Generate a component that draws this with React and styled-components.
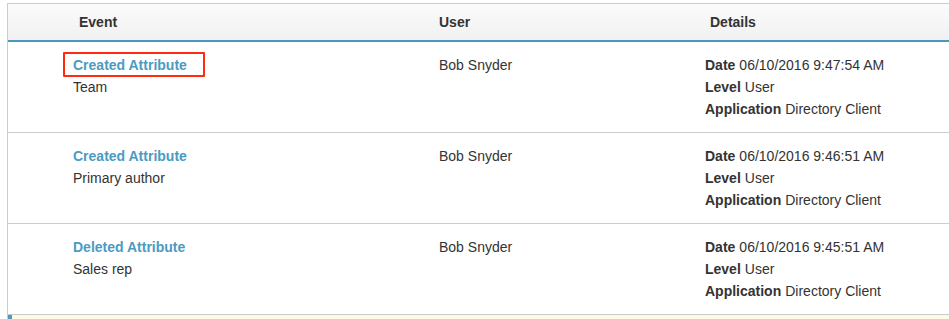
import React from 'react';
import styled, { createGlobalStyle } from 'styled-components';

const GlobalStyle = createGlobalStyle`
  body {
    margin: 0;
    background: #ffffff;
    font-family: "Liberation Sans", Arial, sans-serif;
    overflow: hidden;
  }
  #root {
    padding: 3px 0 0 7px;
  }
`;

const Table = styled.div`
  width: 980px;
  border-top: 1px solid #cccccc;
  border-left: 1px solid #cccccc;
`;

const Grid = styled.div`
  display: grid;
  grid-template-columns: 431px 266px 1fr;
`;

const Header = styled(Grid)`
  height: 36px;
  align-items: center;
  background: linear-gradient(#fbfbfb, #f1f1f1);
  border-bottom: 2px solid #4a98bb;
`;

const HeadCell = styled.div`
  padding-left: ${(p) => p.$indent || 0}px;
  font-size: 14px;
  font-weight: bold;
  color: #333333;
`;

const Row = styled(Grid)`
  height: 90px;
  border-bottom: 1px solid #cccccc;
  box-sizing: content-box;
`;

const Cell = styled.div`
  padding: 12px 0 0 ${(p) => p.$indent || 0}px;
  font-size: 14px;
  line-height: 22px;
  color: #333333;
`;

const EventLink = styled.a`
  display: inline-block;
  position: relative;
  font-weight: bold;
  color: #4a9bc2;
  text-decoration: none;
  cursor: pointer;

  ${(p) =>
    p.$highlight &&
    `
    &::after {
      content: '';
      position: absolute;
      left: -10px;
      right: -18px;
      top: -2px;
      bottom: -1px;
      border: 2px solid #ff2a10;
      border-radius: 1px;
    }
  `}
`;

const Line = styled.div``;

const Label = styled.b`
  font-weight: bold;
  margin-right: 4px;
`;

const Notice = styled.div`
  height: 6px;
  background: #fdfbe8;
  border-left: 4px solid #4a9bc2;
`;

const events = [
  { action: 'Created Attribute', name: 'Team', date: '06/10/2016 9:47:54 AM', highlight: true },
  { action: 'Created Attribute', name: 'Primary author', date: '06/10/2016 9:46:51 AM' },
  { action: 'Deleted Attribute', name: 'Sales rep', date: '06/10/2016 9:45:51 AM' },
];

export default function App() {
  return (
    <>
      <GlobalStyle />
      <Table>
        <Header>
          <HeadCell $indent={71}>Event</HeadCell>
          <HeadCell>User</HeadCell>
          <HeadCell $indent={5}>Details</HeadCell>
        </Header>
        {events.map((e, i) => (
          <Row key={i}>
            <Cell $indent={65}>
              <EventLink $highlight={e.highlight}>{e.action}</EventLink>
              <Line>{e.name}</Line>
            </Cell>
            <Cell>Bob Snyder</Cell>
            <Cell>
              <Line><Label>Date</Label>{e.date}</Line>
              <Line><Label>Level</Label>User</Line>
              <Line><Label>Application</Label>Directory Client</Line>
            </Cell>
          </Row>
        ))}
        <Notice />
      </Table>
    </>
  );
}
